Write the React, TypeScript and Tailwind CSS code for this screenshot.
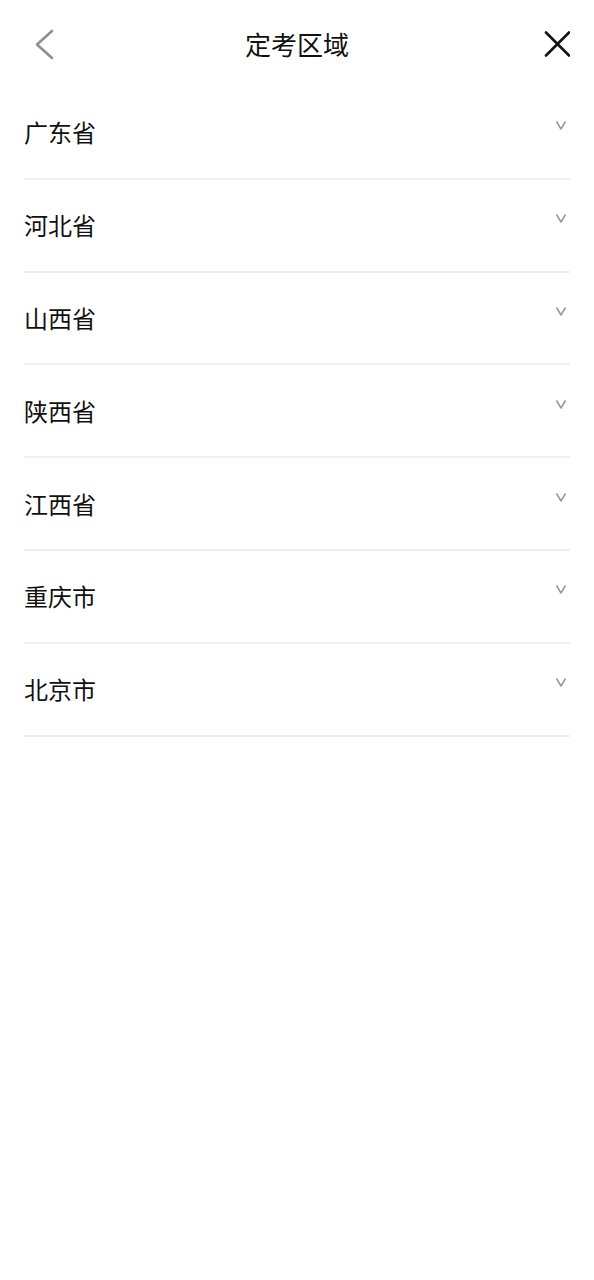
const regions = ["广东省", "河北省", "山西省", "陕西省", "江西省", "重庆市", "北京市"];

function BackIcon() {
  return (
    <svg width="32" height="32" viewBox="0 0 32 32" fill="none">
      <polyline
        points="28,3 13,16.5 28,30"
        stroke="#8e8e93"
        strokeWidth="2.6"
        strokeLinecap="round"
        strokeLinejoin="round"
      />
    </svg>
  );
}

function CloseIcon() {
  return (
    <svg width="32" height="32" viewBox="0 0 32 32" fill="none">
      <path
        d="M8 4.5 L31 27.5 M31 4.5 L8 27.5"
        stroke="#111111"
        strokeWidth="2.6"
        strokeLinecap="round"
      />
    </svg>
  );
}

function ChevronDown() {
  return (
    <svg width="12" height="10" viewBox="0 0 12 10" fill="none">
      <polyline
        points="1.5,1.5 6,9 10.5,1.5"
        stroke="#9a9a9a"
        strokeWidth="1.6"
        strokeLinejoin="round"
      />
    </svg>
  );
}

export default function App() {
  return (
    <div
      className="min-h-screen bg-white text-[#111111]"
      style={{ fontFamily: '"Noto Sans CJK SC", "Noto Sans", sans-serif' }}
    >
      <header className="flex h-[87px] items-center justify-between px-6">
        <button className="flex h-8 w-8 items-center justify-center">
          <BackIcon />
        </button>
        <h1 className="flex-1 text-center text-[26px] leading-none">定考区域</h1>
        <button className="flex h-8 w-8 items-center justify-center">
          <CloseIcon />
        </button>
      </header>

      <ul className="px-6">
        {regions.map((name) => (
          <li
            key={name}
            className="flex h-[92.8px] items-center justify-between border-b-2 border-[#efefef]"
          >
            <span className="text-[24px] leading-none">{name}</span>
            <span className="mb-[14px] mr-[3px]">
              <ChevronDown />
            </span>
          </li>
        ))}
      </ul>
    </div>
  );
}
